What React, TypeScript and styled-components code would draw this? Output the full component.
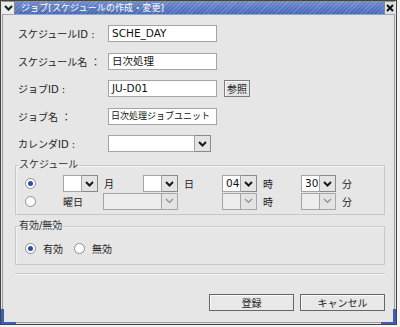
import React from 'react';
import styled, { createGlobalStyle } from 'styled-components';

const Global = createGlobalStyle`
    html, body {
        margin: 0;
        padding: 0;
        background: #f4f4f4;
    }
    body {
        font-family: "DejaVu Sans", "Noto Sans CJK JP", sans-serif;
        font-size: 10px;
        color: #222;
    }
`;

const Frame = styled.div`
    position: relative;
    width: 397px;
    height: 325px;
    box-sizing: border-box;
    border: 1px solid #444;
    background: #e6e6e6;
    box-shadow: inset 0 0 0 1px #e6e6e6, inset 0 0 0 2px #9c9c9c;
    display: flex;
    flex-direction: column;
`;

const Corner = styled.span<{ $side: 'left' | 'right' }>`
    position: absolute;
    bottom: 0;
    ${(p) => (p.$side === 'left' ? 'left: 0;' : 'right: 0;')}
    width: 15px;
    height: 15px;
    box-sizing: border-box;
    ${(p) =>
        p.$side === 'left'
            ? 'border-left: 3px solid #3d5fb3;'
            : 'border-right: 3px solid #3d5fb3;'}
    border-bottom: 2px solid #3d5fb3;
`;

const TitleBar = styled.div`
    height: 13px;
    margin: 0 1px 0 1px;
    display: flex;
    align-items: center;
    background:
        repeating-linear-gradient(-45deg, rgba(255, 255, 255, 0.16) 0 1px, transparent 1px 3px),
        linear-gradient(#6f8bcc, #4767b3);
    border-bottom: 1px solid #9aa4b8;
`;

const TitleIcon = styled.div`
    width: 12px;
    height: 12px;
    background: #ececec;
    border-right: 1px solid #888;
    display: flex;
    align-items: center;
    justify-content: center;
    flex: none;
`;

const TitleText = styled.div`
    flex: 1;
    color: #fff;
    font-size: 9px;
    padding-left: 6px;
    letter-spacing: 0.1px;
    white-space: nowrap;
`;

const CloseBox = styled.div`
    width: 10px;
    height: 12px;
    background: #e0e0e0;
    border-left: 1px solid #888;
    display: flex;
    align-items: center;
    justify-content: center;
    flex: none;
`;

const Body = styled.div`
    flex: 1;
    display: flex;
    flex-direction: column;
    padding: 10px 11px 0 14px;
`;

const Form = styled.div`
    display: grid;
    grid-template-columns: 90px auto;
    grid-auto-rows: 17px;
    row-gap: 10.5px;
    padding-left: 3px;
    align-items: center;
`;

const Label = styled.div`
    font-size: 10px;
    white-space: nowrap;
`;

const FieldLine = styled.div`
    display: flex;
    align-items: center;
    gap: 7px;
    height: 17px;
`;

const TextBox = styled.div<{ $w: number; $disabled?: boolean; $tight?: boolean }>`
    width: ${(p) => p.$w}px;
    height: 17px;
    box-sizing: border-box;
    border: 1px solid #a4a4a4;
    background: ${(p) => (p.$disabled ? '#ededed' : '#fff')};
    font-size: ${(p) => (p.$tight ? '9px' : '10.5px')};
    line-height: 15px;
    padding-left: ${(p) => (p.$tight ? '2px' : '3px')};
    white-space: nowrap;
    overflow: hidden;
    color: #111;
`;

const SmallButton = styled.div<{ $w: number }>`
    width: ${(p) => p.$w}px;
    height: 17px;
    box-sizing: border-box;
    border: 1px solid #7c7c7c;
    background: #e4e4e4;
    box-shadow: inset 1px 1px 0 #fafafa;
    font-size: 10px;
    display: flex;
    align-items: center;
    justify-content: center;
`;

const ComboWrap = styled.div<{ $col?: string }>`
    display: flex;
    align-items: center;
    height: 100%;
    ${(p) => (p.$col ? `grid-column: ${p.$col};` : '')}
`;

const ComboButton = styled.div<{ $disabled?: boolean }>`
    width: 16px;
    height: 17px;
    box-sizing: border-box;
    border: 1px solid ${(p) => (p.$disabled ? '#a8a8a8' : '#8a8a8a')};
    border-left: none;
    background: #e4e4e4;
    display: flex;
    align-items: center;
    justify-content: center;
    flex: none;
`;

const Unit = styled.span`
    margin-left: 6px;
    font-size: 10px;
`;

const Caret = styled.span`
    display: inline-block;
    width: 1px;
    height: 12px;
    background: #111;
    vertical-align: -2px;
    margin-left: 1px;
`;

const Group = styled.fieldset<{ $mt: number }>`
    margin: ${(p) => p.$mt}px 0 0 0;
    padding: 0;
    border: 1px solid #c8c8c8;
    box-shadow: inset 1px 1px 0 #f2f2f2;
    min-width: 0;
`;

const Legend = styled.legend`
    font-size: 10px;
    line-height: 12px;
    padding: 0 1px;
    margin-left: 2px;
    color: #333;
`;

const ScheduleGrid = styled.div`
    display: grid;
    grid-template-columns: 38px 40px 40px 79px 79px auto;
    grid-template-rows: 17px 18px;
    padding: 4px 0 4px 9px;
    align-items: center;
`;

const Cell = styled.div<{ $col?: string }>`
    display: flex;
    align-items: center;
    ${(p) => (p.$col ? `grid-column: ${p.$col};` : '')}
`;

const RadioRow = styled.div`
    display: flex;
    align-items: center;
    height: 13px;
    padding: 10px 0 9px 9px;
`;

const RadioItem = styled.label`
    display: flex;
    align-items: center;
    gap: 7px;
    margin-right: 11px;
    font-size: 10px;
`;

const RadioCircle = styled.span<{ $on?: boolean }>`
    width: 11px;
    height: 11px;
    box-sizing: border-box;
    border-radius: 50%;
    border: 1px solid #8e8e8e;
    background: #fff;
    display: flex;
    align-items: center;
    justify-content: center;
    &::after {
        content: '';
        width: 5px;
        height: 5px;
        border-radius: 50%;
        background: ${(p) => (p.$on ? '#2d4fa0' : 'transparent')};
    }
`;

const Separator = styled.div`
    margin-top: 8px;
    height: 1px;
    background: #c6c6c6;
    border-bottom: 1px solid #f6f6f6;
`;

const Footer = styled.div`
    display: flex;
    justify-content: flex-end;
    gap: 6px;
    margin-top: 19px;
`;

const DialogButton = styled.div<{ $w: number }>`
    width: ${(p) => p.$w}px;
    height: 17px;
    box-sizing: border-box;
    border: 1px solid #666;
    background: #e8e8e8;
    box-shadow: inset 1px 1px 0 #fbfbfb;
    font-size: 10px;
    display: flex;
    align-items: center;
    justify-content: center;
`;

const Chevron = ({ disabled }: { disabled?: boolean }) => (
    <svg width="9" height="6" viewBox="0 0 9 6">
        <path
            d="M1 1 L4.5 4.5 L8 1"
            fill="none"
            stroke={disabled ? '#8a8a8a' : '#1a1a1a'}
            strokeWidth={disabled ? 1.2 : 2}
        />
    </svg>
);

const Combo = ({
    w,
    value,
    caret,
    disabled,
    col,
    unit,
}: {
    w: number;
    value?: string;
    caret?: boolean;
    disabled?: boolean;
    col?: string;
    unit?: string;
}) => (
    <ComboWrap $col={col}>
        <TextBox $w={w} $disabled={disabled}>
            {value}
            {caret && <Caret />}
        </TextBox>
        <ComboButton $disabled={disabled}>
            <Chevron disabled={disabled} />
        </ComboButton>
        {unit && <Unit>{unit}</Unit>}
    </ComboWrap>
);

export default function App() {
    return (
        <>
            <Global />
            <Frame>
                <TitleBar>
                    <TitleIcon>
                        <svg width="9" height="6" viewBox="0 0 9 6">
                            <path d="M1 1 L4.5 4.5 L8 1" fill="none" stroke="#222" strokeWidth="2.2" />
                        </svg>
                    </TitleIcon>
                    <TitleText>ジョブ[スケジュールの作成・変更]</TitleText>
                    <CloseBox>
                        <svg width="8" height="8" viewBox="0 0 8 8">
                            <path d="M1 1 L7 7 M7 1 L1 7" stroke="#111" strokeWidth="2" />
                        </svg>
                    </CloseBox>
                </TitleBar>
                <Body>
                    <Form>
                        <Label>スケジュールID :</Label>
                        <TextBox $w={109}>SCHE_DAY</TextBox>
                        <Label>スケジュール名 ：</Label>
                        <TextBox $w={109}>日次処理</TextBox>
                        <Label>ジョブID :</Label>
                        <FieldLine>
                            <TextBox $w={109}>JU-D01</TextBox>
                            <SmallButton $w={26}>参照</SmallButton>
                        </FieldLine>
                        <Label>ジョブ名 ：</Label>
                        <TextBox $w={109} $tight>
                            日次処理ジョブユニット
                        </TextBox>
                        <Label>カレンダID :</Label>
                        <Combo w={87} />
                    </Form>

                    <Group $mt={7}>
                        <Legend>スケジュール</Legend>
                        <ScheduleGrid>
                            <Cell>
                                <RadioCircle $on />
                            </Cell>
                            <Combo w={19} col="2 / 4" unit="月" />
                            <Combo w={19} col="4" unit="日" />
                            <Combo w={19} col="5" value="04" caret unit="時" />
                            <Combo w={19} col="6" value="30" unit="分" />

                            <Cell>
                                <RadioCircle />
                            </Cell>
                            <Cell $col="2">曜日</Cell>
                            <Combo w={59} col="3 / 5" disabled />
                            <Combo w={19} col="5" disabled unit="時" />
                            <Combo w={19} col="6" disabled unit="分" />
                        </ScheduleGrid>
                    </Group>

                    <Group $mt={5}>
                        <Legend>有効/無効</Legend>
                        <RadioRow>
                            <RadioItem>
                                <RadioCircle $on />
                                有効
                            </RadioItem>
                            <RadioItem>
                                <RadioCircle />
                                無効
                            </RadioItem>
                        </RadioRow>
                    </Group>

                    <Separator />

                    <Footer>
                        <DialogButton $w={85}>登録</DialogButton>
                        <DialogButton $w={85}>キャンセル</DialogButton>
                    </Footer>
                </Body>
                <Corner $side="left" />
                <Corner $side="right" />
            </Frame>
        </>
    );
}
